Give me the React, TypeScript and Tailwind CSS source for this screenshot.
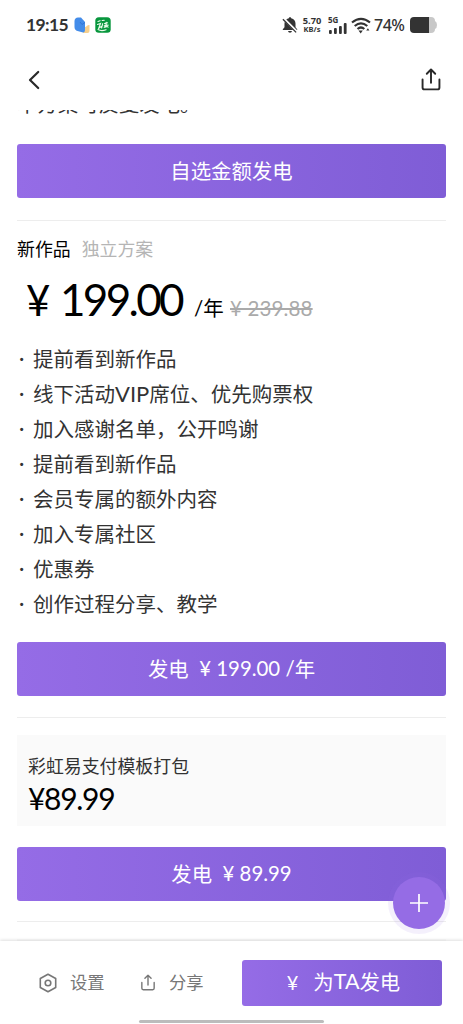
import type { ReactNode } from "react";

const CTA =
  "flex items-center justify-center rounded-[3px] bg-linear-to-r from-[#956ce6] to-[#7f5dd6] pb-[2px] text-[20.4px] whitespace-pre text-white";

const perks: ReactNode[] = [
  "提前看到新作品",
  <>
    线下活动<Latin className="text-[22px]">VIP</Latin>席位、优先购票权
  </>,
  "加入感谢名单，公开鸣谢",
  "提前看到新作品",
  "会员专属的额外内容",
  "加入专属社区",
  "优惠券",
  "创作过程分享、教学",
];

function Latin({ children, className = "" }: { children: ReactNode; className?: string }) {
  return <span className={`font-['Lato','Noto_Sans_CJK_SC',sans-serif] ${className}`}>{children}</span>;
}

function ShareIcon({ className }: { className: string }) {
  return (
    <svg viewBox="0 0 20 24" fill="none" stroke="currentColor" strokeLinecap="round" strokeLinejoin="round" className={className}>
      <path d="M1.2 12v8.3a2 2 0 0 0 2 2h13.6a2 2 0 0 0 2-2V12M10 15.5V1.7M5.6 6 10 1.6 14.4 6" />
    </svg>
  );
}

function StatusBar() {
  return (
    <div className="flex h-[50px] items-center pl-[26px] text-[#333]">
      <Latin className="w-[48px] text-[17.5px] font-bold tracking-[-0.6px]">19:15</Latin>
      <svg viewBox="0 0 16 16" className="h-4 w-4">
        <path d="M9.5 10.5c3-.2 4-3 6-2.500v6q0 2-2 2H9z" fill="#f6cf8c" />
        <path d="M.5 4Q.8.5 4 .5h3l4 4.500v7.500q0 3-2 3L3.500 14Q.5 13 .5 10z" fill="#438ce9" />
        <path d="m6 5 2 2.500 3-2" fill="none" stroke="#3075d8" strokeWidth="1" />
      </svg>
      <svg viewBox="0 0 16 16" className="ml-[5px] h-4 w-4">
        <rect x=".3" y=".3" width="15.4" height="15.4" rx="3.5" fill="#07963d" />
        <path
          d="m3 4.500 2-.8m2.200-.2 2-.2M2.500 7.500l3-1-1.800 4.800 2.600-1.800M7.700 6.700 6.600 11m3-4.400 3-.8M9.200 8.700l4-.6m-2-2.800-.3 5m-1.700 0q2-2 3.900-.2M3 12.500q3.500 2 8 .2"
          fill="none"
          stroke="#e9fbe9"
          strokeWidth="1.15"
          strokeLinecap="round"
        />
      </svg>
      <svg viewBox="0 0 16 18" className="ml-[171px] h-[18px] w-4" fill="currentColor">
        <path d="M8 1.200c.8 0 1.200.5 1.200 1.100 2.900.7 4.300 2.600 4.300 5.200v3.700l1.700 2v.8H.8v-.8l1.700-2V7.500c0-2.600 1.400-4.500 4.300-5.200C6.800 1.700 7.200 1.200 8 1.200zM6 15h4q-.3 1.800-2 1.800T6 15z" />
        <path d="m1.500 2.500 13.200 13.200" stroke="white" strokeWidth="2.600" />
        <path d="m.9 3.200 13.200 13.200" stroke="currentColor" strokeWidth="1.300" />
      </svg>
      <div className="ml-[3px] flex w-[22px] shrink-0 flex-col items-center font-['Noto_Sans',sans-serif] font-bold">
        <span className="text-[9.300px] leading-[9px]">5.70</span>
        <span className="text-[7.500px] leading-[9px]">KB/s</span>
      </div>
      <div className="ml-[5px] flex w-[19px] shrink-0 flex-col">
        <span className="font-['Noto_Sans',sans-serif] text-[8px] leading-[7px] font-bold">5G</span>
        <svg viewBox="0 0 19 11" className="h-[11px] w-[19px]" fill="currentColor">
          <rect x="1" y="7" width="2.800" height="4" rx="1" />
          <rect x="6" y="5" width="2.800" height="6" rx="1" />
          <rect x="11" y="3" width="2.800" height="8" rx="1" />
          <rect x="15.800" y="0" width="2.800" height="11" rx="1" />
        </svg>
      </div>
      <svg viewBox="0 0 20 17" className="ml-[4px] h-[17px] w-5 shrink-0" fill="none" stroke="currentColor" strokeWidth="2.200">
        <path d="M1 5.500Q10-1.900 19 5.500M3.700 9Q10 3.700 16.300 9M6.500 12Q10 9 13.300 12" />
        <path d="M7.500 13.600h4.300L9.700 16.500zM15.200 13.500l1.700-2.300 1.500 2.300z" fill="currentColor" stroke="none" />
      </svg>
      <span className="ml-[3px] w-[36px] shrink-0 font-['Noto_Sans',sans-serif] text-[16px] font-medium tracking-[-0.500px]">74%</span>
      <svg viewBox="0 0 27 16" className="h-4 w-[27px] shrink-0">
        <path d="M19 0h2q4 0 4 4 2 1 2 4t-2 4q0 4-4 4h-2z" fill="#c8c8c8" />
        <path d="M4 0h15v16H4q-4 0-4-4V4q0-4 4-4z" fill="#333" />
      </svg>
    </div>
  );
}

export default function App() {
  return (
    <div className="flex h-[1024px] w-[463px] flex-col overflow-hidden bg-white font-['Noto_Sans_CJK_SC',sans-serif] text-black">
      <header className="h-[110px] shrink-0">
        <StatusBar />
        <div className="flex h-[59px] items-center justify-between pr-[22px] pl-[28px] text-[#292929]">
          <svg viewBox="0 0 12 20" className="h-5 w-3" fill="none" stroke="currentColor" strokeWidth="2.200" strokeLinecap="round" strokeLinejoin="round">
            <path d="M10.200 2 2 10l8.200 8" />
          </svg>
          <ShareIcon className="h-[23px] w-[20px] stroke-2" />
        </div>
      </header>

      <main className="relative min-h-0 flex-1 overflow-hidden px-[17px]">
        <p className="-mt-[21px] h-[28px] text-[20.400px] leading-[28px] text-[#333]">本方案可反复发电。</p>
        <button className={`${CTA} mt-[27px] h-[54px] w-full`}>自选金额发电</button>
        <hr className="mt-[22px] border-[#ededed]" />

        <div className="mt-[13px] flex h-[28px] items-center gap-[11px] text-[17.900px]">
          <span>新作品</span>
          <span className="text-[#b5b5b5]">独立方案</span>
        </div>
        <div className="mt-[9px] flex h-[56px] items-baseline pl-[9px] leading-[56px] whitespace-pre">
          <Latin className="w-[34px] text-[42px]">¥</Latin>
          <Latin className="w-[134px] text-[44px] tracking-[-2.700px]">199.00</Latin>
          <span className="w-[36px] text-[20.500px]"><Latin>/</Latin>年</span>
          <Latin className="text-[20.500px] tracking-[0.150px] text-[#aaa] line-through">¥ 239.88</Latin>
        </div>

        <ul className="mt-[15px] text-[20.500px] leading-[33px] text-[#333]">
          {perks.map((perk, i) => (
            <li key={i} className="flex h-[35px]">
              <span className="w-[16px] shrink-0 pl-[2px] font-['Lato',sans-serif]">·</span>
              <span>{perk}</span>
            </li>
          ))}
        </ul>
        <button className={`${CTA} mt-[20px] h-[54px] w-full`}>
          发电<Latin>{"  ¥ 199.00 /"}</Latin>年
        </button>
        <hr className="mt-[21px] border-[#ededed]" />

        <section className="mt-[17px] h-[91px] bg-[#fafafa] px-[11px] pt-[16px]">
          <h2 className="h-[28px] text-[17.900px] leading-[28px] text-[#333]">彩虹易支付模板打包</h2>
          <Latin className="block text-[30px] leading-[38px] tracking-[-1.300px]">¥89.99</Latin>
        </section>
        <button className={`${CTA} mt-[21px] h-[54px] w-full`}>
          发电<Latin>{"  ¥ 89.99"}</Latin>
        </button>
        <hr className="mt-[20px] border-[#ededed]" />
        <section className="mt-[17px] h-[91px] bg-[#fafafa]" />

        <button aria-label="更多" className="absolute right-[18px] bottom-[12px] flex size-[52px] items-center justify-center rounded-full bg-[#956ce5] text-white ring-[5px] ring-[#956ce5]/10">
          <svg viewBox="0 0 18 18" className="size-[18px]" stroke="currentColor" strokeWidth="1.700">
            <path d="M9 0v18M0 9h18" />
          </svg>
        </button>
      </main>

      <footer className="relative h-[83px] shrink-0 bg-white shadow-[0_-1px_3px_rgba(0,0,0,0.13)]">
        <div className="flex h-[83px] items-center pl-[39px] text-[17.300px] text-[#777]">
          <svg viewBox="0 0 18 20" className="h-[20px] w-[18px]" fill="none" stroke="currentColor" strokeWidth="1.600" strokeLinejoin="round">
            <path d="M9 1.300 16.700 5.500v9L9 18.700 1.300 14.500v-9z" />
            <circle cx="9" cy="10" r="2.800" />
          </svg>
          <span className="ml-[13px] w-[71px] pb-px">设置</span>
          <ShareIcon className="h-[17px] w-[14px] stroke-2" />
          <span className="ml-[14px] w-[73px] pb-px">分享</span>
          <button className={`${CTA} h-[46px] w-[200px] pl-[3px]`}>
            <Latin className="mr-[15px] text-[20px]">¥</Latin>为<Latin className="text-[21.500px]">TA</Latin>发电
          </button>
        </div>
        <div className="absolute bottom-[1px] left-[139px] h-[3px] w-[185px] rounded-full bg-[#bcbcbc]" />
      </footer>
    </div>
  );
}
